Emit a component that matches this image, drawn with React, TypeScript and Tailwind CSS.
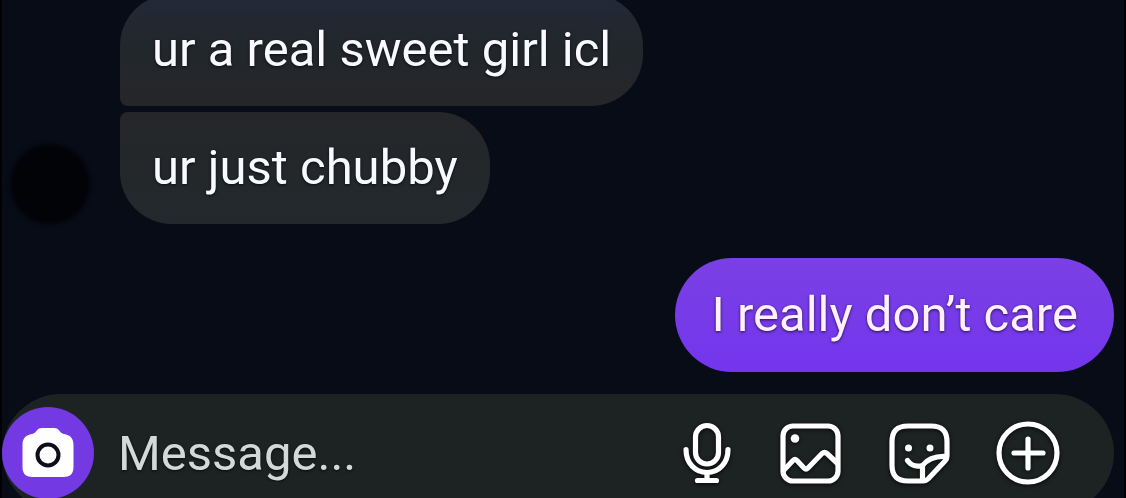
import React from 'react';
import clsx from 'clsx';

interface Message {
  id: number;
  text: string;
  className: string;
}

const received: Message[] = [
  {
    id: 1,
    text: 'ur a real sweet girl icl',
    className: 'rounded-[52px] rounded-bl-lg bg-linear-to-b from-[#222938] via-[#22272b] to-[#26262a]',
  },
  {
    id: 2,
    text: 'ur just chubby',
    className: 'rounded-[52px] rounded-tl-lg bg-linear-to-b from-[#252629] to-[#22292c]',
  },
];

function CameraIcon() {
  return (
    <svg viewBox="0 0 52 50" className="h-[50px] w-[52px]" aria-hidden="true">
      <path
        d="M10 6C15 5 14 0 20 0H32C38 0 37 5 42 6C48 7 51.500 10 51.500 17V39C51.500 46 48 49 41 49H11C4 49 .5 46 .5 39V17C.5 10 4 7 10 6Z"
        fill="#fff"
      />
      <circle cx="26" cy="27" r="10.500" fill="#fff" stroke="#0d0c19" strokeWidth="4" />
    </svg>
  );
}

function MicIcon() {
  return (
    <>
      <rect x="23.500" y="4.500" width="23" height="38.500" rx="11.500" />
      <path d="M14 28.500C14 42 23 51.500 35 51.500S56 42 56 28.500M35 52v7M25.500 59.500h19" />
    </>
  );
}

function ImageIcon() {
  return (
    <>
      <rect x="3" y="5" width="55" height="55" rx="10" />
      <path d="M4 49L13 39.500Q15 37.500 17 39.500L24 47Q26 49 28 47L42 32.500Q44.500 30.500 47 32.500L57 42" />
      <circle cx="15" cy="17.500" r="4.300" fill="#fff" stroke="none" />
    </>
  );
}

function StickerIcon() {
  return (
    <>
      <path d="M59 35V21C59 10 54 5 43 5H20C9 5 4 10 4 21V44C4 55 9 60 20 60H35Q38 60 40 58L57 40Q59 38 59 35Z" />
      <path d="M19.500 39.500C23 44.500 29 46 34.500 44.500C40 37.500 48 35 58 35.500M34.500 45V59" />
      <circle cx="20.500" cy="27" r="3.500" fill="#fff" stroke="none" />
      <circle cx="42" cy="27" r="3.500" fill="#fff" stroke="none" />
    </>
  );
}

function AddIcon() {
  return (
    <>
      <circle cx="32" cy="32" r="29" />
      <path d="M32 18v29M18 32h29" />
    </>
  );
}

const actions = [
  { label: 'Voice message', Icon: MicIcon },
  { label: 'Photo', Icon: ImageIcon },
  { label: 'Sticker', Icon: StickerIcon },
  { label: 'More', Icon: AddIcon },
];

function Bubble({ text, className }: { text: string; className: string }) {
  return (
    <p className={clsx('text-[49px] leading-[56px] text-shadow-[0_1px_3px_rgb(0_0_0/0.7)]', className)}>
      {text}
    </p>
  );
}

export default function App() {
  return (
    <main className="flex h-screen flex-col justify-end overflow-hidden border-x-2 border-black bg-[#070c17] font-[Roboto,'Liberation_Sans',sans-serif] text-[#f8faff]">
      {/* Received messages */}
      <div className="flex items-end gap-[30px] pl-2">
        <div className="size-20 shrink-0 rounded-full bg-[#020307] blur-[2px]" />
        <div className="flex flex-col items-start gap-1.5">
          {received.map((message) => (
            <Bubble key={message.id} text={message.text} className={clsx('px-8 py-7', message.className)} />
          ))}
        </div>
      </div>

      {/* Sent message */}
      <div className="mt-[34px] flex justify-end pr-2.5">
        <Bubble
          text="I really don’t care"
          className="rounded-full bg-linear-to-b from-[#7a40e4] to-[#7435ed] px-9 py-[29px] text-[#fff0ff]"
        />
      </div>

      {/* Composer */}
      <form
        className="-mb-3.5 mt-[22px] mr-2.5 flex h-[118px] shrink-0 items-center rounded-full bg-[#1d2222] pr-[54px]"
        onSubmit={(e) => e.preventDefault()}
      >
        <button
          type="button"
          aria-label="Camera"
          className="flex size-[92px] shrink-0 items-center justify-center rounded-full bg-[#7339e2]"
        >
          <CameraIcon />
        </button>
        <input
          type="text"
          aria-label="Message"
          placeholder="Message..."
          className="ml-6 min-w-0 flex-1 bg-transparent pt-0.5 text-[49px] leading-[56px] outline-none text-shadow-[0_1px_3px_rgb(0_0_0/0.7)] placeholder:text-[#d5d8d8]"
        />
        <div className="flex gap-11">
          {actions.map(({ label, Icon }) => (
            <button key={label} type="button" aria-label={label}>
              <svg
                viewBox="0 0 64 64"
                className="size-16 drop-shadow-[0_1px_2px_rgb(0_0_0/0.8)]"
                fill="none"
                stroke="#fff"
                strokeWidth="5.200"
                strokeLinecap="round"
                strokeLinejoin="round"
                aria-hidden="true"
              >
                <Icon />
              </svg>
            </button>
          ))}
        </div>
      </form>
    </main>
  );
}
